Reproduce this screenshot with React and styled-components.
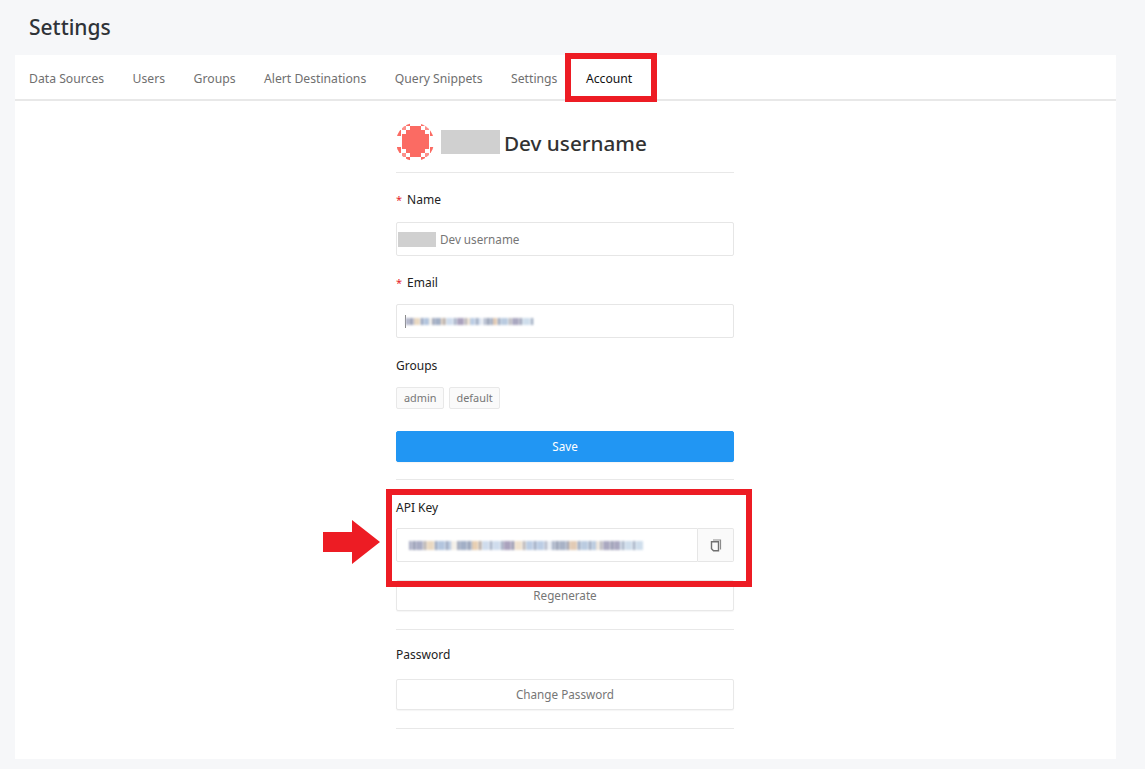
import React from 'react';
import styled, { createGlobalStyle } from 'styled-components';

const GlobalStyle = createGlobalStyle`
  html, body {
    margin: 0;
    padding: 0;
    background: #f6f7f9;
    font-family: 'Noto Sans', 'Open Sans', sans-serif;
    color: #323232;
  }
`;

const Page = styled.div`
  position: relative;
  width: 1145px;
  height: 769px;
  overflow: hidden;
  padding: 0 29px 0 15px;
  box-sizing: border-box;
`;

const PageTitle = styled.h1`
  margin: 0;
  height: 55px;
  padding: 14px 0 0 14px;
  box-sizing: border-box;
  font-size: 21px;
  line-height: 27px;
  font-weight: 500;
  color: #2f3338;
`;

const TabBar = styled.nav`
  display: flex;
  align-items: center;
  gap: 28.5px;
  height: 46px;
  padding: 3px 14px 0;
  box-sizing: border-box;
  background: #fff;
  border-bottom: 2px solid #e8e8e8;
`;

const Tab = styled.a`
  font-size: 12.2px;
  font-weight: 400;
  color: ${(p) => (p.$active ? '#111' : '#6f6f6f')};
`;

const Card = styled.main`
  background: #fff;
  height: 658px;
  padding: 22px 1px 0 0;
  box-sizing: border-box;
`;

const Form = styled.div`
  width: 338px;
  margin: 0 auto;
  display: flex;
  flex-direction: column;
`;

const Heading = styled.div`
  display: flex;
  align-items: center;
  height: 38px;
  gap: 4px;
  padding-bottom: 11px;
  border-bottom: 1px solid #e8e8e8;
  font-size: 20.7px;
  font-weight: 500;
  color: #323232;
`;

const HeadingName = styled.span`
  padding-top: 2px;
`;

const Avatar = styled.svg`
  width: 38px;
  height: 38px;
  margin-right: 3px;
  flex: none;
`;

const Redacted = styled.span`
  display: inline-block;
  width: ${(p) => p.$w}px;
  height: ${(p) => p.$h}px;
  background: #d0d0d0;
  flex: none;
`;

const Label = styled.label`
  display: block;
  font-size: 12px;
  line-height: 18px;
  font-weight: 400;
  color: #222;
  margin-top: ${(p) => p.$top}px;
  margin-bottom: ${(p) => p.$bottom}px;
`;

const Star = styled.span`
  color: #e5262b;
  margin-right: 5px;
  font-size: 11px;
`;

const Input = styled.div`
  display: flex;
  align-items: center;
  gap: 4px;
  height: 34px;
  box-sizing: border-box;
  border: 1px solid #e6e6e6;
  border-radius: 2px;
  padding-left: 1px;
  font-size: 11.7px;
  color: #767676;
`;

const KeyInput = styled(Input)`
  flex: 1;
  border-radius: 2px 0 0 2px;
`;

const Caret = styled.span`
  width: 1px;
  height: 13px;
  margin: 0 -5px 0 7px;
  background: #8a8a8a;
  flex: none;
`;

// the address and the key are smudged out in the picture
const Smear = styled.span`
  display: block;
  width: ${(p) => p.$w}px;
  height: ${(p) => p.$h}px;
  margin-left: ${(p) => p.$left}px;
  filter: blur(1px);
  background:
    repeating-linear-gradient(
      90deg,
      rgba(255, 255, 255, 0) 0 3px,
      rgba(255, 255, 255, 0.75) 3px 4px,
      rgba(90, 100, 130, 0.45) 4px 6px,
      rgba(255, 255, 255, 0.5) 6px 7px,
      rgba(255, 255, 255, 0) 7px 11px
    ),
    linear-gradient(
      90deg,
      #a9adc4 0 6%,
      #ead9c2 6% 11%,
      #b3c5de 11% 18%,
      #f3efe8 18% 21%,
      #a2afc6 21% 27%,
      #e8cfb2 27% 31%,
      #cfdced 31% 40%,
      #aaa2bd 40% 45%,
      #f0e2cf 45% 50%,
      #bccde4 50% 58%,
      #e9edf3 58% 61%,
      #a8b2c6 61% 68%,
      #e2cbb5 68% 72%,
      #bacbe0 72% 80%,
      #eee6dc 80% 83%,
      #aaa8c0 83% 90%,
      #cfdeec 90% 100%
    );
`;

const Tags = styled.div`
  display: flex;
  gap: 5px;
`;

const Tag = styled.span`
  height: 22px;
  padding: 0 6px 0 7px;
  box-sizing: border-box;
  border: 1px solid #e8e8e8;
  border-radius: 2px;
  background: #fafafa;
  font-size: 10.9px;
  line-height: 20px;
  color: #767676;
`;

const Button = styled.button`
  display: block;
  width: 100%;
  height: 31px;
  padding: 0 0 2px;
  margin-top: ${(p) => p.$top || 0}px;
  border: 1px solid ${(p) => (p.$primary ? '#2196f3' : '#e8e8e8')};
  border-radius: 2px;
  background: ${(p) => (p.$primary ? '#2196f3' : '#fff')};
  color: ${(p) => (p.$primary ? '#fff' : '#767676')};
  font-family: inherit;
  font-size: 11.7px;
  box-shadow: 0 1px 1px rgba(0, 0, 0, 0.04);
`;

const Divider = styled.hr`
  width: 100%;
  margin: ${(p) => p.$top}px 0 0;
  border: 0;
  border-top: 1px solid #e8e8e8;
`;

const KeyRow = styled.div`
  display: flex;
`;

const CopyAddon = styled.div`
  width: 36px;
  height: 34px;
  box-sizing: border-box;
  display: flex;
  align-items: center;
  justify-content: center;
  border: 1px solid #e6e6e6;
  border-left: 0;
  border-radius: 0 2px 2px 0;
  background: #fafafa;
`;

const Callout = styled.div`
  position: absolute;
  box-sizing: border-box;
  border: 6px solid #ed1c24;
  left: ${(p) => p.$x}px;
  top: ${(p) => p.$y}px;
  width: ${(p) => p.$w}px;
  height: ${(p) => p.$h}px;
`;

const Arrow = styled.svg`
  position: absolute;
  left: 323px;
  top: 520px;
`;

const tabs = ['Data Sources', 'Users', 'Groups', 'Alert Destinations', 'Query Snippets', 'Settings'];

// blocky identicon: stepped centre plus loose squares around the rim
function Identicon() {
  return (
    <Avatar viewBox="0 0 38 38">
      <defs>
        <clipPath id="rim">
          <circle cx="19" cy="19" r="19" />
        </clipPath>
      </defs>
      <g clipPath="url(#rim)" fill="#fb6b63">
        <path d="M14 3h11v4h4v4h4v15h-4v4h-4v4H14v-4h-4v-4H6V11h4V7h4z" />
        <path d="M10 0h4v3h-4zM25 0h4v3h-4zM10 34h4v4h-4zM25 34h4v4h-4zM1 7h4v6H1zM34 7h4v6h-4zM1 24h4v6H1zM34 24h4v6h-4z" />
        <path opacity="0.75" d="M6 3h4v4H6zM29 3h4v4h-4zM6 30h4v4H6zM29 30h4v4h-4z" />
      </g>
    </Avatar>
  );
}

function CopyIcon() {
  return (
    <svg width="12" height="13" viewBox="0 0 12 13" fill="none">
      <path d="M3 1h7.5v9.5" stroke="#8c8c8c" strokeWidth="1.2" />
      <path d="M1.5 2.8h7v9h-5l-2-2z" stroke="#6f6f6f" strokeWidth="1.4" />
    </svg>
  );
}

export default function App() {
  return (
    <Page>
      <GlobalStyle />
      <PageTitle>Settings</PageTitle>
      <TabBar>
        {tabs.map((t) => (
          <Tab key={t}>{t}</Tab>
        ))}
        <Tab $active>Account</Tab>
      </TabBar>
      <Card>
        <Form>
          <Heading>
            <Identicon />
            <Redacted $w={59} $h={24} />
            <HeadingName>Dev username</HeadingName>
          </Heading>

          <Label $top={18} $bottom={13}>
            <Star>*</Star>Name
          </Label>
          <Input>
            <Redacted $w={38} $h={15} />
            <span>Dev username</span>
          </Input>

          <Label $top={18} $bottom={12}>
            <Star>*</Star>Email
          </Label>
          <Input>
            <Caret />
            <Smear $w={128} $h={7} $left={1} />
          </Input>

          <Label $top={19} $bottom={12}>Groups</Label>
          <Tags>
            <Tag>admin</Tag>
            <Tag>default</Tag>
          </Tags>

          <Button $primary $top={22}>Save</Button>
          <Divider $top={17} />

          <Label $top={19} $bottom={11}>API Key</Label>
          <KeyRow>
            <KeyInput>
              <Smear $w={234} $h={9} $left={11} />
            </KeyInput>
            <CopyAddon>
              <CopyIcon />
            </CopyAddon>
          </KeyRow>

          <Button $top={18}>Regenerate</Button>
          <Divider $top={18} />

          <Label $top={16} $bottom={15}>Password</Label>
          <Button>Change Password</Button>
          <Divider $top={18} />
        </Form>
      </Card>

      <Callout $x={565} $y={53} $w={92} $h={49} />
      <Callout $x={386} $y={489} $w={366} $h={98} />
      <Arrow width="58" height="44" viewBox="0 0 58 44">
        <path fill="#ed1c24" d="M0 12h29V0l28 22-28 22V32H0z" />
      </Arrow>
    </Page>
  );
}
